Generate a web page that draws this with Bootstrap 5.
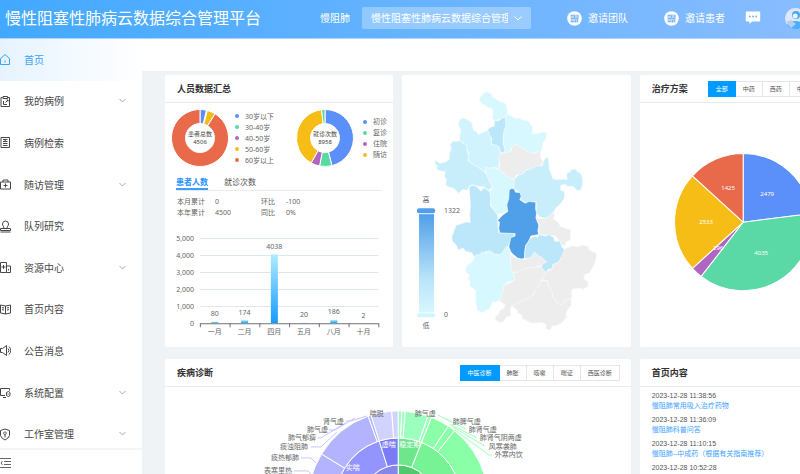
<!DOCTYPE html>
<html lang="zh-CN">
<head>
<meta charset="utf-8">
<meta name="viewport" content="width=device-width, initial-scale=1">
<title>慢性阻塞性肺病云数据综合管理平台</title>
<link href="https://cdn.jsdelivr.net/npm/bootstrap@5.3.0/dist/css/bootstrap.min.css" rel="stylesheet">
<style>
body{font-family:"Noto Sans","Noto Sans CJK SC",sans-serif;font-size:7px;line-height:10px;color:#555;background:#eff3f5}
.topbar{height:39px;background:linear-gradient(90deg,#42a9ff,#88bcff);border-bottom:1px solid #a9d5ff;color:#fff;font-size:10px;padding:0 0 2px 5px}
.brand-title{font-size:16px;line-height:20px;width:315px;font-weight:400}
.org-select{appearance:none;border:0;border-radius:2px;width:169px;height:22px;font-size:10px;color:#fff;padding:0 23px 0 9px;background:rgba(255,255,255,.3)}
.org-chevron{right:9px;top:7px;pointer-events:none}
.top-link{gap:6px;color:#fff;text-decoration:none}
.side{width:142px}
.side-list{margin-bottom:-7px;min-height:0}
.side-link{font-size:10px;color:#484848;text-decoration:none;gap:13px;padding-right:16px;min-height:0}
.side-link svg{fill:none;stroke:currentColor;stroke-width:1}
.side-link.current{color:#3ba2f5;background:linear-gradient(90deg,#e6f3ff,#fff)}
.side-link .chev{stroke:#aaa}
.side-foot{height:26px;border:0;border-top:2px solid #f4f5f6;padding:4px 0}
.crumb-bar{height:32px}
.board{min-width:703px;margin:4px 0 0 23px;display:grid;grid-template-columns:repeat(3,minmax(0,1fr));gap:12px 9px;grid-template-rows:272px auto}
.span-two{grid-column:span 2}
.panel{background:#fff;border-radius:2px;overflow:hidden}
.panel-head{height:28px;border-bottom:1px solid #e9ecef;padding:0 11px 0 12px}
.panel-head h2{font-size:9px;line-height:12px;font-weight:600;color:#333;margin:0}
.seg .btn{font-size:6px;line-height:8px;padding:3px 7px;border:1px solid #e3e5e8;border-radius:0;color:#555;background:#fff}
.seg .btn.active{background:#009bff;border-color:#009bff;color:#fff}
.donuts{height:70px;padding-left:5px}
.donuts svg{width:60px;height:60px}
.legend-list{margin:0 0 0 5px;padding:0;list-style:none;width:60px}
.legend-list li{display:flex;align-items:center;gap:6px;line-height:11px;color:#666}
.legend-list.end-list{margin-left:8px;width:30px}
.dot{width:4px;height:4px;border-radius:50%}
.c1{background:#5b8ff9}.c2{background:#5ad8a6}.c3{background:#b065c2}.c4{background:#f6bd16}.c5{background:#e86a4a}
.tabs-line{margin:0 11px;height:18px;border-bottom:1px solid #e9ecef;gap:16px}
.tabs-line button{border:0;background:none;padding:0;font-size:8px;line-height:16px;color:#555}
.tabs-line button.active{color:#1e90ff;font-weight:600;box-shadow:inset 0 -2px #3c9cff}
.stats{margin:5px 12px 0;color:#666;display:grid;grid-template-columns:38px 46px 25px 1fr;line-height:11px}
svg text{fill:#666;font-size:7px}
svg .mid{text-anchor:middle}
svg .end{text-anchor:end}
svg .wt{fill:#fff}
svg .sm{font-size:6px}
svg .dk{fill:#444}
.news{padding:4px 12px}
.news li{margin-bottom:4px}
.news time{font-family:"Liberation Sans",sans-serif;display:block;color:#555}
.news a{color:#3ba2ff;text-decoration:none;display:block}
</style>
<script src="https://cdn.jsdelivr.net/npm/bootstrap@5.3.0/dist/js/bootstrap.bundle.min.js"></script>
</head>
<body class="vh-100 overflow-hidden d-flex flex-column">
<header class="topbar d-flex align-items-center flex-shrink-0">
  <h1 class="brand-title mb-0 flex-shrink-0">慢性阻塞性肺病云数据综合管理平台</h1>
  <label for="org" class="flex-shrink-0 me-2 pe-1">慢阻肺</label>
  <div class="position-relative flex-shrink-0">
    <select id="org" class="org-select d-block"><option>慢性阻塞性肺病云数据综合管理平台</option></select>
    <svg class="org-chevron position-absolute" width="8" height="8" fill="none" stroke="#fff"><path d="M0.5 2.5 4 6l3.500-3.500"/></svg>
  </div>
  <a href="#" class="top-link d-flex align-items-center flex-shrink-0 ms-4 ps-2"><svg class="ms-1" width="15" height="15" viewBox="0 0 15 15"><circle cx="7.500" cy="7.500" r="7.300" fill="#fff"/><path d="M3.500 3.500h8v8h-8z" fill="#b4d5fe"/><path d="M4 4.500h2.500M4 7.500h3M4 10.500h2.500M7.500 4v3.500H11V4M8.500 9v2.500M10.500 8.500v2" fill="none" stroke="#6aaefc" stroke-width=".8"/></svg>邀请团队</a>
  <a href="#" class="top-link d-flex align-items-center flex-shrink-0 ms-4 ps-2"><svg class="ms-1" width="15" height="15" viewBox="0 0 15 15"><circle cx="7.500" cy="7.500" r="7.300" fill="#fff"/><path d="M3.500 3.500h8v8h-8z" fill="#b4d5fe"/><path d="M4 4.500h2.500M4 7.500h3M4 10.500h2.500M7.500 4v3.500H11V4M8.500 9v2.500M10.500 8.500v2" fill="none" stroke="#6aaefc" stroke-width=".8"/></svg>邀请患者</a>
  <a href="#" class="flex-shrink-0 ms-3 ps-1 d-flex" aria-label="消息"><svg width="16" height="14" viewBox="0 0 16 14"><path d="M1.500 .5h13q.7 0 .7.700v8.600q0 .7-.7.700H7L4.500 13v-2.500h-3q-.7 0-.7-.7V1.200q0-.7.7-.7z" fill="#fff"/><g fill="#7db8ff"><circle cx="4.800" cy="5.500" r="1"/><circle cx="8" cy="5.500" r="1"/><circle cx="11.200" cy="5.500" r="1"/></g></svg></a>
  <a href="#" class="flex-shrink-0 ms-4 d-flex" aria-label="用户"><svg width="21" height="21" viewBox="0 0 21 21"><circle cx="10.500" cy="10.500" r="10.500" fill="#dfe8fb"/><path d="M2 17q3-4 8.500-4t8.500 4q-3 4-8.500 4T2 17" fill="#46b0ff"/><path d="M1 14l5-2 5 4-5 4z" fill="#b9cdf3"/><circle cx="11" cy="7" r="4" fill="#46a9f5"/><circle cx="10.200" cy="8" r="2.500" fill="#edf3ff"/></svg></a>
</header>
<div class="d-flex flex-fill overflow-hidden">
  <nav class="side bg-white d-flex flex-column flex-shrink-0" aria-label="主菜单">
    <div class="side-list d-flex flex-column flex-fill" id="menu"></div>
    <button class="side-foot bg-white text-start position-relative" aria-label="收起菜单"><svg class="d-block" width="12" height="12" fill="none" stroke="#666"><path d="M0 2.500h11M4 5.500h7M4 8.500h7M0 11.500h11M2.500 5 1 7l1.500 2"/></svg></button>
  </nav>
  <main class="flex-fill overflow-hidden">
    <div class="crumb-bar bg-white"></div>
    <div class="board">
      <section class="panel">
        <div class="panel-head d-flex align-items-center"><h2>人员数据汇总</h2></div>
        <div class="donuts d-flex align-items-center">
          <svg viewBox="0 0 60 60"><g id="d1"></g><text class="mid sm dk" x="30" y="28">患者总数</text><text class="mid sm dk" x="30" y="36">4506</text></svg>
          <ul class="legend-list"><li><i class="dot c1"></i>30岁以下</li><li><i class="dot c2"></i>30-40岁</li><li><i class="dot c3"></i>40-50岁</li><li><i class="dot c4"></i>50-60岁</li><li><i class="dot c5"></i>60岁以上</li></ul>
          <svg viewBox="0 0 60 60"><g id="d2"></g><text class="mid sm dk" x="30" y="28">就诊次数</text><text class="mid sm dk" x="30" y="36">8958</text></svg>
          <ul class="legend-list end-list"><li><i class="dot c1"></i>初诊</li><li><i class="dot c2"></i>复诊</li><li><i class="dot c3"></i>住院</li><li><i class="dot c4"></i>随访</li></ul>
        </div>
        <div class="tabs-line d-flex"><button class="active">患者人数</button><button>就诊次数</button></div>
        <div class="stats"><span>本月累计</span><span>0</span><span>环比</span><span>-100</span><span>本年累计</span><span>4500</span><span>同比</span><span>0%</span></div>
        <svg class="d-block w-100" viewBox="165 218 228 126"><defs><linearGradient id="bar" x2="0" y2="1"><stop stop-color="#b0ecff"/><stop offset="1" stop-color="#149cff"/></linearGradient></defs><g id="bars"></g></svg>
      </section>
      <section class="panel">
        <svg class="d-block w-100" viewBox="403 75 228 272">
          <defs><linearGradient id="scale" x2="0" y2="1"><stop stop-color="#509fe9"/><stop offset=".65" stop-color="#b8e3f9"/><stop offset="1" stop-color="#d6f8fe"/></linearGradient></defs>
          <g transform="translate(400 75) scale(.33333)" stroke="#f4fbfd" stroke-width="2" stroke-linejoin="round" id="map">
            <path fill="#d6f8fe" d="M240 70 248 62 254 54 262 50 270 55 278 58 280 66 290 72 300 78 312 83 320 86 322 100 326 112 320 125 300 132 288 138 278 130 282 115 280 100 266 98 256 90 245 83z"/>
            <path fill="#d6f8fe" d="M320 125 326 117 338 124 348 130 360 129 370 135 388 138 394 150 400 155 399 176 415 176 427 171 442 173 440 190 432 200 430 215 425 230 410 230 400 236 384 228 372 220 352 208 338 215 332 230 315 236 318 218 312 205 315 160z"/>
            <path fill="#bce6fa" d="M266 162 276 156 286 153 286 138 300 137 308 128 319 127 320 150 314 170 312 190 312 206 317 222 315 233 304 232 300 216 285 209 276 208 278 190 268 177z"/>
            <path fill="#d0f3fd" d="M178 148 181 135 190 128 203 133 215 139 220 150 222 165 232 170 238 178 256 170 266 166 272 180 276 190 277 208 296 213 304 232 300 260 298 280 288 277 276 281 266 277 255 292 245 282 235 275 221 267 210 260 207 245 210 232 203 225 203 210 191 204 182 196 182 180 186 166z"/>
            <path fill="#c8eefb" d="M153 208 162 198 176 199 184 196 190 204 203 209 203 225 208 237 207 257 221 267 235 275 245 282 255 292 268 297 270 318 280 335 268 346 255 335 236 333 219 328 210 335 205 345 190 344 178 354 165 340 150 336 140 330 142 312 136 303 139 290 124 287 112 282 115 272 108 266 108 255 122 264 139 261 150 254 151 238 156 222z"/>
            <path fill="#ededed" d="M302 235 325 232 335 229 338 216 352 208 364 215 371 221 384 228 400 235 415 231 425 230 423 244 432 262 424 271 408 275 395 285 380 284 370 297 350 300 345 311 330 308 315 295 298 285 303 265 298 255z"/>
            <path fill="#d6f8fe" d="M258 276 270 280 284 277 298 282 315 296 330 308 345 312 344 338 332 342 325 405 308 415 290 418 280 400 274 385 275 365 272 350 281 335 270 317 262 300z"/>
            <path fill="#c8eefb" d="M345 312 360 298 370 297 380 285 395 283 408 273 430 271 434 255 445 246 449 262 450 280 455 292 460 310 470 313 485 312 504 313 502 294 514 290 516 283 530 282 535 290 545 295 550 310 550 325 545 345 534 346 522 334 502 333 500 327 485 330 484 345 496 350 495 370 484 386 468 400 462 416 440 430 420 424 411 411 411 380 385 385 366 375 362 352 344 340z"/>
            <path fill="#bce6fa" d="M210 338 219 330 233 334 245 348 255 338 272 350 275 370 273 390 280 400 295 420 298 473 348 475 332 500 325 518 305 538 285 537 278 530 260 529 250 536 225 545 218 532 200 529 192 518 178 525 172 510 160 498 158 485 166 463 172 449 190 445 200 440 214 442 212 420 214 390z"/>
            <path fill="#509fe9" d="M330 345 336 340 345 341 349 351 362 352 366 363 362 374 378 384 390 379 410 381 409 400 412 415 410 428 419 450 416 467 419 478 395 482 388 500 380 510 377 528 376 548 367 552 355 548 342 537 335 530 329 514 332 500 335 487 347 483 348 475 302 473 299 460 301 440 295 436 310 420 326 409 323 389 329 370z"/>
            <path fill="#d6f8fe" d="M228 540 244 537 248 530 260 532 270 526 285 537 305 538 323 512 331 526 335 545 334 570 341 590 348 615 325 620 315 630 309 655 302 675 290 681 280 679 273 698 250 712 235 705 230 680 230 645 212 632 214 619 206 611 212 600 198 587 205 569 220 560z"/>
            <path fill="#ededed" d="M335 540 355 550 380 553 395 539 404 530 415 533 420 543 436 548 442 561 428 571 408 576 394 578 380 580 366 587 348 592 340 592 334 570z"/>
            <path fill="#ededed" d="M412 430 440 430 462 410 466 419 463 431 478 442 484 454 501 460 515 463 514 480 513 494 500 500 498 510 488 510 480 500 475 490 468 482 448 480 419 478 419 448z"/>
            <path fill="#bce6fa" d="M376 550 377 528 380 510 394 490 406 484 416 486 420 478 442 483 448 477 464 487 467 499 482 497 488 515 499 526 490 545 479 560 461 568 460 579 447 583 440 592 425 577 431 566 442 560 427 545 420 543 406 530 395 547z"/>
            <path fill="#ededed" d="M498 520 520 512 535 515 548 509 566 513 570 524 592 535 590 552 585 569 578 580 572 592 555 598 554 612 565 618 568 632 553 641 540 638 518 642 517 670 500 674 485 690 472 680 460 662 458 648 448 635 445 616 425 611 440 592 460 579 461 568 479 560z"/>
            <path fill="#ededed" d="M348 592 380 580 408 576 425 575 440 592 425 615 419 632 407 645 402 659 385 671 370 677 350 688 336 693 334 708 336 721 322 725 315 738 305 742 290 735 288 724 296 719 304 704 314 700 318 687 302 677 309 655 315 630 348 615 341 590z"/>
            <path fill="#ededed" d="M430 615 445 617 448 635 458 648 460 662 472 680 485 690 500 674 516 668 516 690 506 702 500 716 502 727 484 745 469 751 459 752 452 765 440 760 441 749 428 741 410 743 395 743 370 730 368 718 356 714 353 703 340 695 345 688 370 677 385 671 402 659 407 645 419 632 423 618z"/>
          </g>
          <rect x="420" y="214" width="15" height="98" fill="url(#scale)"/><rect x="418" y="208" width="18" height="5" rx="2" fill="#509fe9"/><rect x="418" y="313" width="18" height="4" rx="2" fill="#d0f6fc"/>
          <text class="mid" x="427" y="202">高</text><text x="445" y="213">1322</text><text x="445" y="317">0</text><text class="mid" x="427" y="328">低</text>
        </svg>
      </section>
      <section class="panel">
        <div class="panel-head d-flex align-items-center"><h2 class="flex-shrink-0">治疗方案</h2><div class="btn-group seg ms-3 ps-1 flex-shrink-0"><button class="btn active">全部</button><button class="btn">中药</button><button class="btn">西药</button><button class="btn">中西结合</button></div></div>
        <svg class="d-block w-100" viewBox="640 103 228 240"><g id="pie"></g></svg>
      </section>
      <section class="panel span-two">
        <div class="panel-head d-flex align-items-center justify-content-between"><h2>疾病诊断</h2><div class="btn-group seg"><button class="btn active">中医诊断</button><button class="btn">肺胀</button><button class="btn">咳嗽</button><button class="btn">喘证</button><button class="btn">西医诊断</button></div></div>
        <svg class="d-block w-100" viewBox="165 387 466 230"><g id="burst"></g></svg>
      </section>
      <section class="panel">
        <div class="panel-head d-flex align-items-center"><h2>首页内容</h2></div>
        <ul class="news list-unstyled mb-0">
          <li><time>2023-12-28 11:38:56</time><a href="#">慢阻肺常用吸入治疗药物</a></li>
          <li><time>2023-12-28 11:36:09</time><a href="#">慢阻肺科普问答</a></li>
          <li><time>2023-12-28 11:10:15</time><a href="#">慢阻肺--中成药（根据有关指南推荐）</a></li>
          <li><time>2023-12-28 10:52:28</time></li>
        </ul>
      </section>
    </div>
  </main>
</div>
<script>
const $ = id => document.getElementById(id);
const icons = {
 home:'M.5 5.500 5 1.500l4.500 4V11.500H.5zM5 7.500v2',
 clip:'M2.500 2.500H1v9h8.500v-9H8M3 1.500h4.500v2H3zM3.500 6v3.500H7M5.500 7.500 8 5M6.500 5H8v1.500',
 doc:'M1 1.500h8.500v10H1zM3 3.500h4.500M5.200 3.500v2M3 5.500h4.500M3 7.500h4.500M3 9.500h4.500',
 kit:'M.5 4h10v7H.5zM3 4V2h5v2M5.500 5.500v4M3.500 7.500h4',
 stamp:'M4 8C4 6.500 2.500 6 2.500 4a3 3 0 0 1 6 0C8.500 6 7 6.500 7 8M.5 8.500h10v2H.5zM.5 12h10',
 hosp:'M.5 1.500h6v10h-6zM6.500 5h4v6.500h-4M3.500 4v4M1.500 6h4M8.500 8v1.500',
 book:'M5.500 3 .5 2v8l5 1 5-1V2zM5.500 3v8M7 5l2-.4M7 7l2-.4M2 4.600l2 .4M2 6.600l2 .4',
 horn:'M.5 4.500h2l4-3v10l-4-3h-2zM8 4.500q2 2 0 4M9 2.500q3.500 4 0 8',
 gear:'M5 9.500H.5v-7h9v2M3 11.500h3M10 6.500l-1.500-1-2 1v3l2 1 1.500-1zM8.200 7.500v1',
 shield:'M5 1 9.500 2.500v5Q8.500 10.500 5 12 1.500 10.500.5 7.500v-5zM5 6.500v3M5 6.500a1.300 1.300 0 1 0-.1 0'};
const menu = [['首页','home'],['我的病例','clip',1],['病例检索','doc'],['随访管理','kit',1],['队列研究','stamp'],['资源中心','hosp',1],['首页内容','book'],['公告消息','horn'],['系统配置','gear',1],['工作室管理','shield',1]];
$('menu').innerHTML = menu.map(([t,i,c],n) => `<a href="#" class="side-link d-flex flex-fill align-items-center${n?'':' current'}"><svg width="11" height="13">${`<path d="${icons[i]}"/>`}</svg><span>${t}</span>${c?'<svg class="chev ms-auto" width="7" height="6"><path d="M.5 1 3.500 4l3-3"/></svg>':''}</a>`).join('');

const pt = (x,y,r,a) => { a *= Math.PI/180; return (x+r*Math.sin(a)).toFixed(2)+' '+(y-r*Math.cos(a)).toFixed(2); };
const arc = (x,y,r0,r1,a0,a1,f) => { const l = a1-a0>180?1:0;
  return `<path fill="${f}" stroke="#fff" stroke-width="1" d="M${pt(x,y,r1,a0)}A${r1} ${r1} 0 ${l} 1 ${pt(x,y,r1,a1)}L${pt(x,y,r0,a1)}A${r0} ${r0} 0 ${l} 0 ${pt(x,y,r0,a0)}z"/>`; };
const txt = (x,y,s,c='') => `<text class="${c}" x="${x}" y="${y}">${s}</text>`;
const [B,G,P,Y,R] = ['#5b8ff9','#5ad8a6','#b065c2','#f6bd16','#e86a4a'];
$('d1').innerHTML = [[0,13,B],[15,32,Y],[32,360,R]].map(s => arc(30,30,14.5,28.5,...s)).join('');
$('d2').innerHTML = [[0,166,B],[166,191,G],[191,209,P],[209,353,Y],[353,360,G]].map(s => arc(30,30,14.5,28.5,...s)).join('');

const vals = [80,174,4038,20,186,2], months = ['一月','二月','四月','五月','八月','十月'];
let h = '';
for (let i=1;i<6;i++) h += `<path d="M200 ${323.5-i*17}h178" stroke="#e0e6f1"/>`+txt(194,325.5-i*17,i+',000','end');
h += txt(194,325.5,'0','end');
vals.forEach((v,i) => { const x = 214.800+i*29.700, t = v/1000*17; h += `<rect x="${x-3.500}" y="${323-t}" width="7" height="${t}" fill="url(#bar)"/>`+txt(x,317.500-t,v,'mid')+txt(x,334,months[i],'mid'); });
h += '<path d="M200 323.500h178.500" stroke="#6e7079"/>';
for (let i=0;i<7;i++) h += `<path d="M${(200.300+i*29.700).toFixed(1)} 323v4" stroke="#6e7079"/>`;
$('bars').innerHTML = h;

let a = 0; const cures = [[2479,B,767,196],[4035,G,761,255],[296,P,718,250],[2533,Y,706,224],[1425,R,728,190]];
$('pie').innerHTML = cures.map(([v,c]) => { const e = a+v/10768*360, s = arc(743,222,0,68.5,a,e,c); a = e; return s; }).join('') + cures.map(([v,,x,y]) => txt(x,y,v,'mid wt sm')).join('');

const ring = (r0,r1,list) => list.map(s => arc(398.5,501,r0,r1,...s)).join('');
h = ring(9,36,[[-180,0,'#8585ea'],[0,180,'#4fc96a']])
 + ring(36,63,[[-120,-17.7,'#9494ff'],[-17.7,0,'#7b7bf5'],[0,21.7,'#6ee68c'],[21.7,120,'#77f295']])
 + ring(63,90,[[-95,-58.6,'#b3b3ff'],[-58.6,-19.6,'#b3b3ff'],[-19.6,-17.7,'#b3b3ff'],[-17.7,-4.2,'#d2d2ff'],[-4.2,0,'#d2d2ff'],[0,2.2,'#9dffbd'],[2.2,4.4,'#9dffbd'],[4.4,19.3,'#9dffbd'],[19.3,21.7,'#9dffbd'],[21.7,33.8,'#8affa8'],[33.8,38.7,'#8affa8'],[38.7,110,'#8affa8']]);
const line = (d,c) => `<path d="${d}" fill="none" stroke="${c}"/>`;
h += ['M346 421h5l16-5','M329 430h6l20-12','M318 438h3l25-15','M311 447h10l16-15','M301 458h10l5 5','M294 471h14l4 4'].map(d => line(d,'#c4c4ff')).join('');
h += ['M438 415l14 7','M446 419l20 10','M450 424l27 14','M453 427l32 19','M455 430l34 25h3'].map(d => line(d,'#9dffb8')).join('');
h += [[344,424,'肾气虚'],[328,432.5,'肺气虚'],[316,440.5,'肺气郁痹'],[308,449,'痰浊阻肺'],[299,460.5,'痰热郁肺'],[292,473,'表寒里热'],[384,416,'喘脱']].map(t => txt(...t,'end')).join('');
h += [[415,416,'肺气虚'],[453,424,'肺脾气虚'],[469,432.5,'肺肾气虚'],[480,440.5,'肺肾气阴两虚'],[489,449,'风寒袭肺'],[495,457,'外寒内饮']].map(t => txt(...t)).join('');
h += txt(389,447,'虚喘','mid wt')+txt(353,470,'实喘','mid wt')+txt(410,447,'稳定期','mid wt');
$('burst').innerHTML = h;
</script>
</body>
</html>
